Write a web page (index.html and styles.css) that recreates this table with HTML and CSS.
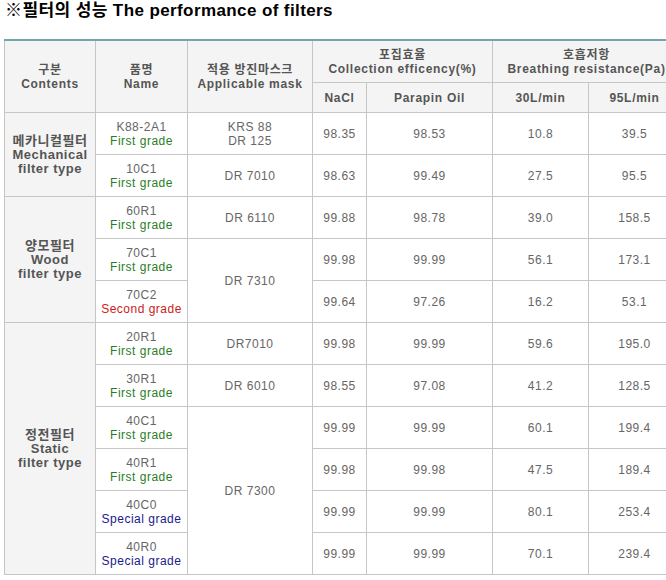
FILE: index.html
```html
<!DOCTYPE html>
<html lang="ko">
<head>
<meta charset="utf-8">
<link rel="stylesheet" href="styles.css">
</head>
<body>
<h1 class="title">※필터의 성능 The performance of filters</h1>
<table class="perf">
  <colgroup>
    <col class="c-kind"><col class="c-name"><col class="c-mask"><col class="c-nacl"><col class="c-oil"><col class="c-30"><col class="c-95">
  </colgroup>
  <thead>
    <tr class="h1">
      <th rowspan="2">구분<br>Contents</th>
      <th rowspan="2">품명<br>Name</th>
      <th rowspan="2">적용 방진마스크<br>Applicable mask</th>
      <th colspan="2">포집효율<br>Collection efficency(%)</th>
      <th colspan="2">호흡저항<br>Breathing resistance(Pa)</th>
    </tr>
    <tr class="h2">
      <th>NaCl</th><th>Parapin Oil</th><th>30L/min</th><th>95L/min</th>
    </tr>
  </thead>
  <tbody>
    <tr>
      <td rowspan="2" class="kind">메카니컬필터<br>Mechanical<br>filter type</td>
      <td>K88-2A1<br><span class="g1">First grade</span></td>
      <td>KRS 88<br>DR 125</td>
      <td>98.35</td><td>98.53</td><td>10.8</td><td>39.5</td>
    </tr>
    <tr>
      <td>10C1<br><span class="g1">First grade</span></td>
      <td>DR 7010</td>
      <td>98.63</td><td>99.49</td><td>27.5</td><td>95.5</td>
    </tr>
    <tr>
      <td rowspan="3" class="kind">양모필터<br>Wood<br>filter type</td>
      <td>60R1<br><span class="g1">First grade</span></td>
      <td>DR 6110</td>
      <td>99.88</td><td>98.78</td><td>39.0</td><td>158.5</td>
    </tr>
    <tr>
      <td>70C1<br><span class="g1">First grade</span></td>
      <td rowspan="2">DR 7310</td>
      <td>99.98</td><td>99.99</td><td>56.1</td><td>173.1</td>
    </tr>
    <tr>
      <td>70C2<br><span class="g2">Second grade</span></td>
      <td>99.64</td><td>97.26</td><td>16.2</td><td>53.1</td>
    </tr>
    <tr>
      <td rowspan="6" class="kind">정전필터<br>Static<br>filter type</td>
      <td>20R1<br><span class="g1">First grade</span></td>
      <td>DR7010</td>
      <td>99.98</td><td>99.99</td><td>59.6</td><td>195.0</td>
    </tr>
    <tr>
      <td>30R1<br><span class="g1">First grade</span></td>
      <td>DR 6010</td>
      <td>98.55</td><td>97.08</td><td>41.2</td><td>128.5</td>
    </tr>
    <tr>
      <td>40C1<br><span class="g1">First grade</span></td>
      <td rowspan="4">DR 7300</td>
      <td>99.99</td><td>99.99</td><td>60.1</td><td>199.4</td>
    </tr>
    <tr>
      <td>40R1<br><span class="g1">First grade</span></td>
      <td>99.98</td><td>99.98</td><td>47.5</td><td>189.4</td>
    </tr>
    <tr>
      <td>40C0<br><span class="gs">Special grade</span></td>
      <td>99.99</td><td>99.99</td><td>80.1</td><td>253.4</td>
    </tr>
    <tr>
      <td>40R0<br><span class="gs">Special grade</span></td>
      <td>99.99</td><td>99.99</td><td>70.1</td><td>239.4</td>
    </tr>
  </tbody>
</table>
</body>
</html>
```
FILE: styles.css
```css
html, body {
  margin: 0;
  padding: 0;
  overflow: hidden;
  background: #fff;
}
body {
  padding-left: 4px;
  font-family: "Liberation Sans", "Noto Sans CJK KR", sans-serif;
}
.title {
  margin: 0 0 0 1px;
  height: 39px;
  font-size: 17px;
  line-height: 21px;
  font-weight: bold;
  color: #000;
  letter-spacing: 0.4px;
}
.perf {
  border-collapse: collapse;
  table-layout: fixed;
  width: 676px;
  border-top: 2px solid #6fa8ab;
  font-size: 12px;
  line-height: 14px;
  letter-spacing: 0.5px;
  color: #666;
}
.c-kind { width: 91px; }
.c-name { width: 92px; }
.c-mask { width: 125px; }
.c-nacl { width: 54px; }
.c-oil { width: 126px; }
.c-30 { width: 96px; }
.c-95 { width: 92px; }
.perf th, .perf td {
  border: 1px solid #c6c6c6;
  text-align: center;
  vertical-align: middle;
  padding: 0;
}
.perf th {
  background: #f4f4f4;
  color: #555;
  font-weight: bold;
  letter-spacing: 0.7px;
}
.perf .h1 th { height: 41px; }
.perf .h2 th { height: 29px; }
.perf td { height: 41px; }
.perf td.kind {
  background: #f4f4f4;
  color: #555;
  font-weight: bold;
  font-size: 13px;
  line-height: 14px;
  letter-spacing: 0.5px;
}
.g1 { color: #2b7d1f; }
.g2 { color: #cc1a1a; }
.gs { color: #1a1a8c; }
```
